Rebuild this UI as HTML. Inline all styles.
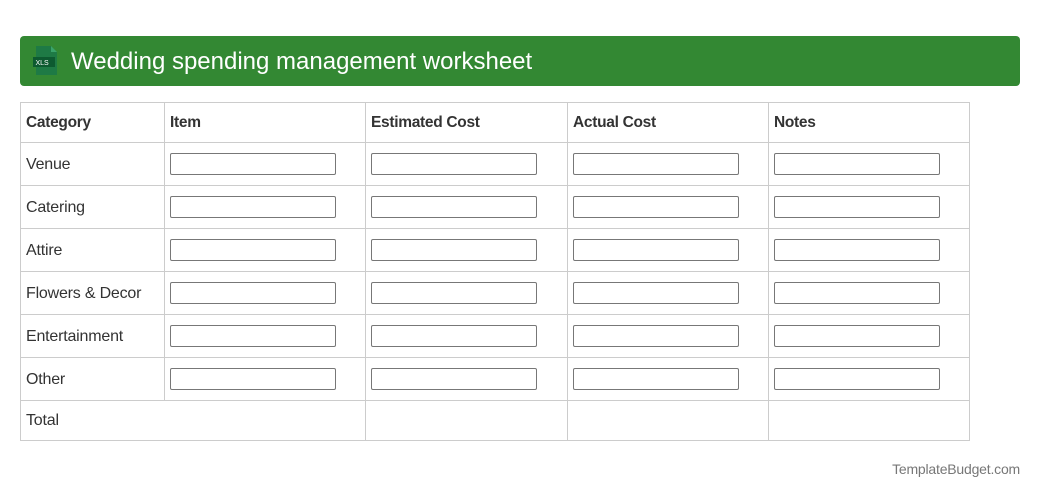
<!DOCTYPE html>
<html><head><meta charset="utf-8"><style>
*{margin:0;padding:0;box-sizing:border-box}
body{width:1040px;height:498px;background:#fff;font-family:"Liberation Sans",Arial,sans-serif;color:#333;position:relative;overflow:hidden}
.hdr{position:absolute;left:20px;top:36px;width:1000px;height:50px;background:#338833;border-radius:4px}
.hdr .t{position:absolute;left:51px;top:11px;color:#fff;font-size:24px;line-height:30px}
.hl{position:absolute;background:#ccc;height:1px;left:20px;width:950px}
.vl{position:absolute;background:#ccc;width:1px}
.tx{position:absolute;font-size:16px;line-height:20px;letter-spacing:-0.2px}
.b{font-weight:bold;font-size:15.5px;letter-spacing:-0.3px}
.in{position:absolute;width:166px;height:22px;border:1px solid #777;border-radius:2px;background:#fff}
.ft{position:absolute;right:20px;top:461px;font-size:14px;color:#777;letter-spacing:-0.2px}
</style></head><body>
<div class="hdr">
<svg style="position:absolute;left:13px;top:9px" width="26" height="32" viewBox="0 0 26 32"><path d="M3 1h15l6 6v23H3z" fill="#1e7a45"/><path d="M18 1v6h6z" fill="#3aa36a"/><rect x="0" y="12" width="22" height="10" fill="#0d5a30"/><text x="2.5" y="20" font-size="7" fill="#fff" font-family="Liberation Sans">XLS</text></svg>
<div class="t">Wedding spending management worksheet</div>
</div>
<div class="hl" style="top:102px"></div>
<div class="hl" style="top:142px"></div>
<div class="hl" style="top:185px"></div>
<div class="hl" style="top:228px"></div>
<div class="hl" style="top:271px"></div>
<div class="hl" style="top:314px"></div>
<div class="hl" style="top:357px"></div>
<div class="hl" style="top:400px"></div>
<div class="hl" style="top:440px"></div>
<div class="vl" style="left:20px;top:102px;height:339px"></div>
<div class="vl" style="left:164px;top:102px;height:298px"></div>
<div class="vl" style="left:365px;top:102px;height:339px"></div>
<div class="vl" style="left:567px;top:102px;height:339px"></div>
<div class="vl" style="left:768px;top:102px;height:339px"></div>
<div class="vl" style="left:969px;top:102px;height:339px"></div>
<div class="tx b" style="left:26px;top:113px">Category</div>
<div class="tx b" style="left:170px;top:113px">Item</div>
<div class="tx b" style="left:371px;top:113px">Estimated Cost</div>
<div class="tx b" style="left:573px;top:113px">Actual Cost</div>
<div class="tx b" style="left:774px;top:113px">Notes</div>
<div class="tx" style="left:26px;top:155px">Venue</div>
<div class="tx" style="left:26px;top:198px">Catering</div>
<div class="tx" style="left:26px;top:241px">Attire</div>
<div class="tx" style="left:26px;top:284px">Flowers &amp; Decor</div>
<div class="tx" style="left:26px;top:327px">Entertainment</div>
<div class="tx" style="left:26px;top:370px">Other</div>
<div class="tx" style="left:26px;top:411px">Total</div>
<div id="ins"></div>
<script>
var xs=[170,371,573,774],ys=[153,196,239,282,325,368],h='';
ys.forEach(function(y){xs.forEach(function(x){h+='<div class="in" style="left:'+x+'px;top:'+y+'px"></div>';});});
document.getElementById('ins').innerHTML=h;
</script>
<div class="ft">TemplateBudget.com</div>
</body></html>
